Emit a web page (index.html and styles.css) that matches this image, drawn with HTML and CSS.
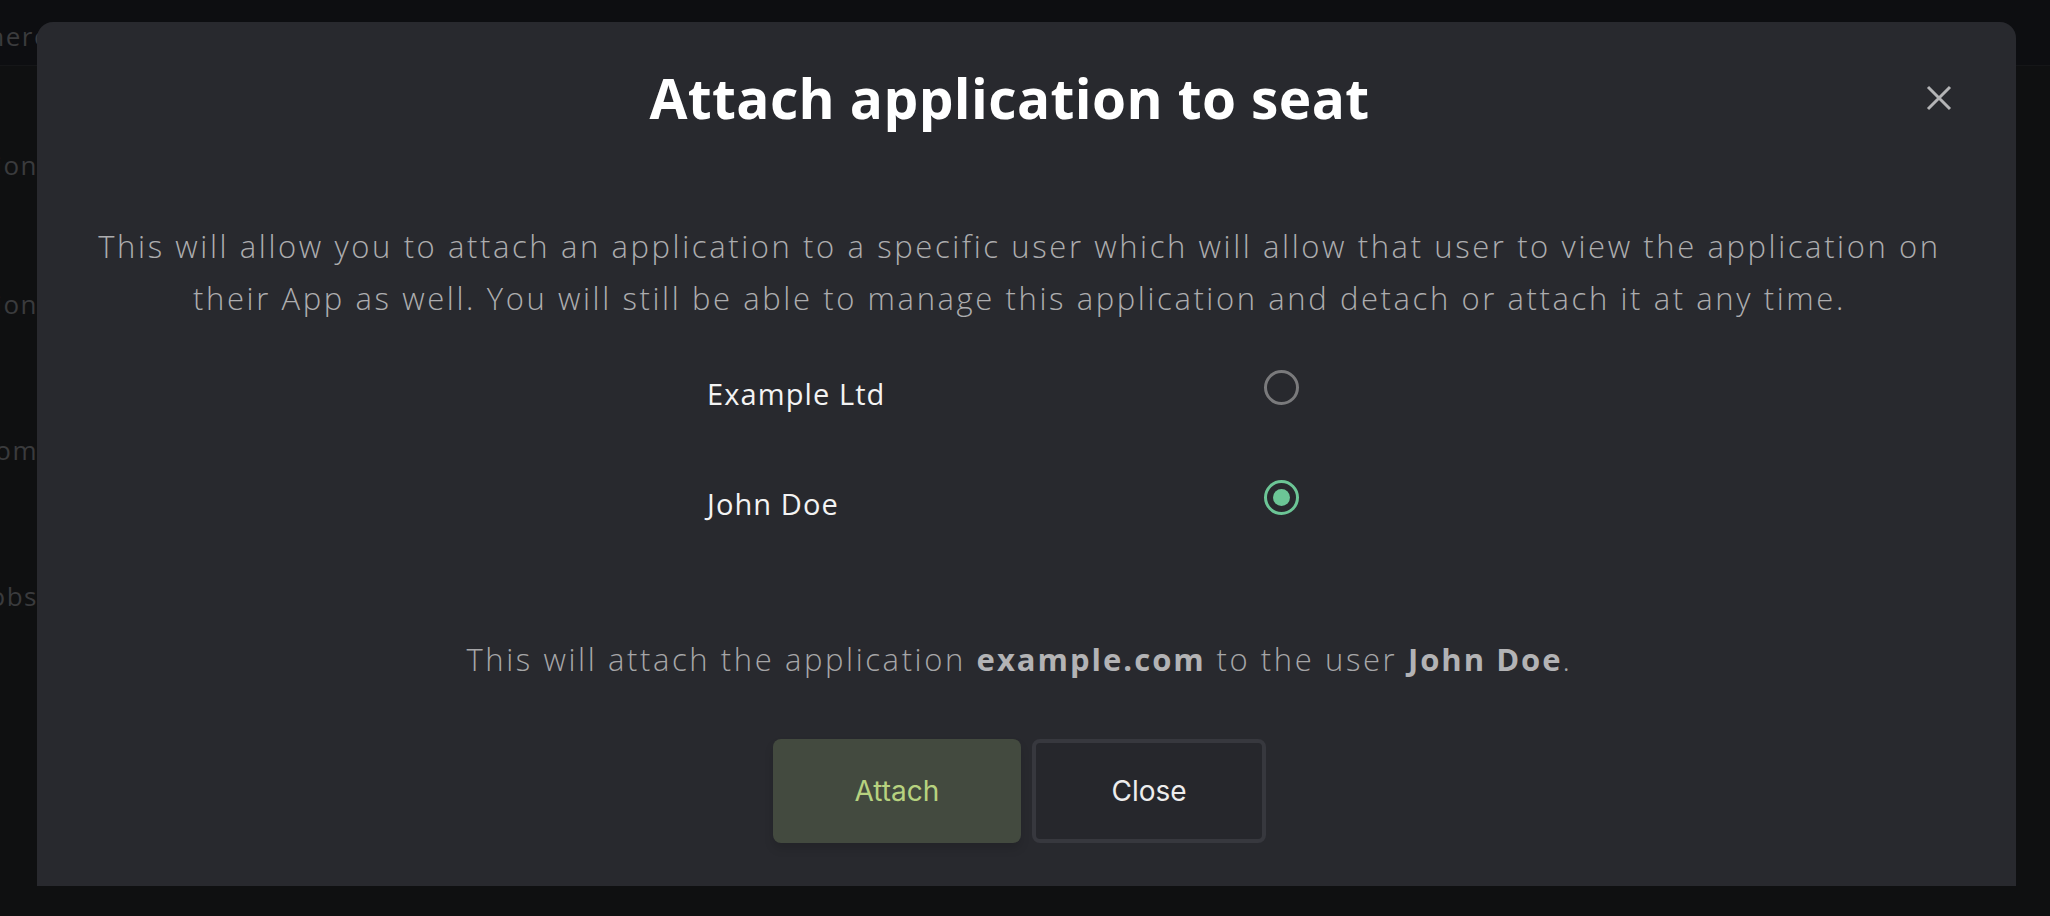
FILE: index.html
```html
<!DOCTYPE html>
<html lang="en">
<head>
<meta charset="utf-8">
<title>Attach application to seat</title>
<link rel="stylesheet" href="styles.css">
</head>
<body>
<div class="page">
  <div class="topbar"><span class="bg-item wide">Somewhere</span></div>
  <ul class="bg-list">
    <li class="bg-item r1">Permission</li>
    <li class="bg-item r2">Organisation</li>
    <li class="bg-item r3">example.com</li>
    <li class="bg-item r4">Jobs</li>
  </ul>
</div>

<div class="modal" role="dialog" aria-labelledby="modal-title">
  <header class="modal-head">
    <span class="head-spacer"></span>
    <h2 class="title" id="modal-title">Attach application to seat</h2>
    <button class="close-x" aria-label="Close">
      <svg width="26" height="26" viewBox="0 0 26 26"><path d="M2 2 L24 24 M24 2 L2 24" stroke="#b4b4b6" stroke-width="3" stroke-linecap="butt" fill="none"/></svg>
    </button>
  </header>

  <p class="desc">This will allow you to attach an application to a specific user which will allow that user to view the application on<br>their App as well. You will still be able to manage this application and detach or attach it at any time.</p>

  <div class="options">
    <label class="option"><span class="opt-label">Example Ltd</span><span class="radio"></span></label>
    <label class="option"><span class="opt-label">John Doe</span><span class="radio checked"></span></label>
  </div>

  <p class="summary">This will attach the application <strong>example.com</strong> to the user <strong>John Doe</strong>.</p>

  <div class="actions">
    <button class="btn btn-primary">Attach</button>
    <button class="btn btn-secondary">Close</button>
  </div>
</div>
</body>
</html>
```

FILE: styles.css
```css
* { box-sizing: border-box; }
html, body {
  margin: 0;
  padding: 0;
  width: 2050px;
  height: 916px;
  overflow: hidden;
  background: #0f1011;
  font-family: "Open Sans", "Noto Sans", sans-serif;
}

/* background page behind the overlay */
.page {
  width: 2050px;
  height: 916px;
}
.topbar {
  height: 66px;
  background: #0d0e11;
  border-bottom: 1px solid #151618;
  padding-top: 18px;
}
.bg-item {
  display: block;
  width: 38px;
  overflow: hidden;
  white-space: nowrap;
  direction: rtl;
  font-size: 26px;
  letter-spacing: 1.5px;
  line-height: 36px;
  color: #3a3b3d;
}
.bg-item.wide { width: 50px; }
.bg-list {
  list-style: none;
  margin: 0;
  padding: 0;
}
.r1 { margin-top: 81px; }
.r2 { margin-top: 103px; }
.r3 { margin-top: 110px; }
.r4 { margin-top: 110px; }

/* modal */
.modal {
  position: absolute;
  left: 37px;
  top: 22px;
  width: 1979px;
  height: 864px;
  background: #28292e;
  border-radius: 16px 16px 0 0;
  padding: 0 64px 0 50px;
  display: flex;
  flex-direction: column;
}
.modal-head {
  display: grid;
  grid-template-columns: 1fr auto 1fr;
  align-items: center;
  padding-top: 40px;
  height: 112px;
}
.title {
  margin: 0;
  font-size: 55px;
  line-height: 72px;
  font-weight: 700;
  color: #ffffff;
  letter-spacing: 0.4px;
  padding-right: 20px;
}
.close-x {
  justify-self: end;
  width: 26px;
  height: 26px;
  padding: 0;
  border: 0;
  background: none;
  display: flex;
}

.desc {
  margin: 86px 0 0;
  text-align: center;
  white-space: nowrap;
  font-size: 31px;
  font-weight: 300;
  letter-spacing: 2.6px;
  line-height: 52px;
  color: #adadaf;
}

.options {
  margin: 33px 0 0 620px;
  display: flex;
  flex-direction: column;
  gap: 50px;
  width: 592px;
}
.option {
  display: flex;
  align-items: center;
  justify-content: space-between;
  height: 60px;
}
.opt-label {
  font-size: 29px;
  letter-spacing: 1.1px;
  color: #f3f3f3;
  padding-top: 12px;
}
.radio {
  width: 35px;
  height: 35px;
  border: 3.5px solid #7a7a7c;
  border-radius: 50%;
  display: flex;
  align-items: center;
  justify-content: center;
}
.radio.checked { border-color: #6cc596; }
.radio.checked::after {
  content: "";
  width: 17px;
  height: 17px;
  border-radius: 50%;
  background: #6cc596;
}

.summary {
  margin: 106px 0 0;
  text-align: center;
  white-space: nowrap;
  font-size: 31px;
  font-weight: 300;
  letter-spacing: 2.6px;
  line-height: 52px;
  color: #a6a6a8;
}
.summary strong {
  font-weight: 700;
  letter-spacing: 2px;
  color: #b3b3b5;
}

.actions {
  margin-top: 54px;
  display: flex;
  justify-content: center;
  gap: 11px;
}
.btn {
  height: 104px;
  border-radius: 8px;
  font-family: Inter, "Noto Sans", sans-serif;
  font-size: 28px;
  font-weight: 400;
  cursor: pointer;
}
.btn-primary {
  width: 248px;
  background: #434a3f;
  color: #b7d27f;
  border: 0;
  box-shadow: 0 6px 10px rgba(0, 0, 0, 0.12);
}
.btn-secondary {
  width: 234px;
  background: #26272c;
  color: #ededed;
  border: 4px solid #37383e;
}
```
